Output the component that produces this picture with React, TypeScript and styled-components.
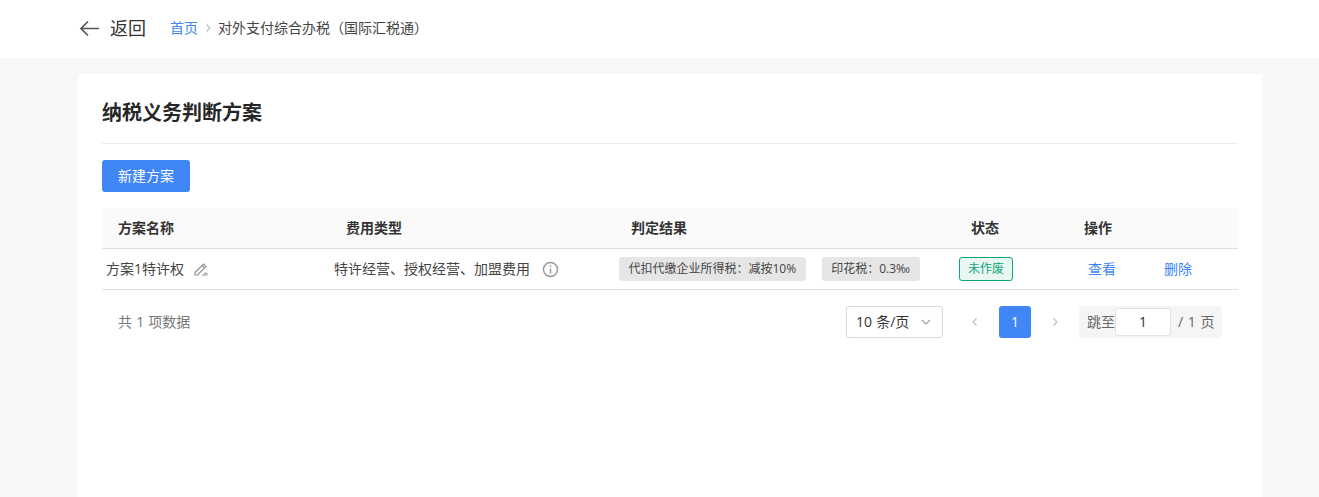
import React from "react";
import styled, { createGlobalStyle } from "styled-components";

const Global = createGlobalStyle`
  html, body { margin: 0; padding: 0; height: 100%; overflow: hidden; }
  body { background: #f6f7f9; font-family: "Open Sans", "Noto Sans CJK SC", sans-serif; color: #333; font-size: 14px; }
  * { box-sizing: border-box; }
`;

const TopBar = styled.header`
  height: 58px; background: #fff; display: flex; align-items: center; padding-left: 78px;
`;
const BackLink = styled.a`
  display: flex; align-items: center; gap: 9px; width: 92px; font-size: 18px; line-height: 24px; color: #333;
  padding-bottom: 2px;
`;
const Crumbs = styled.nav`
  display: flex; align-items: center; font-size: 14px; line-height: 20px; color: #444; padding-bottom: 2px;
`;
const CrumbLink = styled.a`color: #4086f4;`;
const CrumbSep = styled.span`
  width: 20px; display: flex; justify-content: center; color: #bbb;
`;
const Page = styled.main`padding: 16px 57px 0 78px;`;
const Card = styled.section`
  background: #fff; padding: 24px 24px 0; height: 423px;
`;
const TitleBar = styled.div`
  height: 46px; border-bottom: 1px solid #ebebeb; margin-bottom: 16px;
`;
const Title = styled.h1`
  margin: 0; font-size: 20px; line-height: 30px; font-weight: 700; color: #262626;
`;
const PrimaryButton = styled.button`
  display: block; width: 88px; height: 32px; border: 0; border-radius: 3px; background: #4086f4; color: #fff;
  font: inherit; font-size: 14px; padding: 0 0 2px; margin-bottom: 16px;
`;
const cols = "228px 285px 340px 113px 170px";
const HeadRow = styled.div`
  display: grid; grid-template-columns: ${cols}; height: 41px; background: #fafafa;
  border-bottom: 1px solid #dedede; align-items: center;
`;
const HeadCell = styled.div`
  padding-left: 16px; font-weight: 600; font-size: 14px; line-height: 20px; color: #333;
`;
const BodyRow = styled.div`
  display: grid; grid-template-columns: ${cols}; height: 41px;
  border-bottom: 1px solid #dedede; align-items: center;
`;
const Cell = styled.div`
  padding-left: 4px; display: flex; align-items: center; line-height: 20px; color: #444; white-space: nowrap;
`;
const IconSlot = styled.span<{ $gap: number }>`
  display: inline-flex; margin-left: ${(p) => p.$gap}px; color: #8c8c8c;
`;
const Tag = styled.span`
  height: 24px; display: inline-flex; align-items: center; padding: 0 9.5px; background: #e6e6e6;
  border-radius: 3px; font-size: 12px; color: #444; margin-right: 16px;
`;
const Status = styled.span`
  height: 24px; width: 54px; display: inline-flex; align-items: center; justify-content: center;
  background: #e8f7f1; border: 1px solid #0ea678; border-radius: 3px; font-size: 12px; color: #12a37a;
`;
const ActionLink = styled.a`
  color: #4086f4; padding: 0 16px; margin-right: 16px;
`;
const Footer = styled.div`
  display: flex; align-items: center; padding: 16px; height: 64px;
`;
const Total = styled.span`color: #777; font-size: 14px; flex: 1; padding-bottom: 2px; word-spacing: 0.5px;`;
const SizeSelect = styled.div`
  width: 97px; height: 32px; border: 1px solid #d9d9d9; border-radius: 3px; display: flex; align-items: center;
  justify-content: space-between; padding: 0 10px 2px 9px; color: #333; margin-right: 16px; word-spacing: 0.5px;
`;
const SelectCaret = styled.span`display: inline-flex; color: #999; margin-top: 2px;`;
const PageArrow = styled.span`
  width: 32px; height: 32px; display: flex; align-items: center; justify-content: center; color: #bdbdbd;
`;
const PageNum = styled.span`
  width: 32px; height: 32px; margin: 0 8px; border-radius: 3px; background: #4086f4; color: #fff;
  display: flex; align-items: center; justify-content: center; padding-bottom: 2px;
`;
const Jumper = styled.div`
  margin-left: 8px; width: 143px; height: 32px; background: #f5f5f5; border-radius: 3px; display: flex;
  align-items: center; padding-left: 8px; color: #666;
`;
const JumpLabel = styled.span`padding-bottom: 2px; word-spacing: 1px;`;
const JumpInput = styled.div`
  width: 56px; height: 28px; background: #fff; border: 1px solid #e2e2e2; border-radius: 3px; color: #333;
  display: flex; align-items: center; justify-content: center; margin-right: 7px; padding-bottom: 2px;
`;

const Chevron = ({ dir }: { dir: "l" | "r" | "d" }) => (
  <svg width="12" height="12" viewBox="0 0 12 12" fill="none" stroke="currentColor" strokeWidth="1.1">
    <path d={dir === "l" ? "M7.5 2.5 4 6l3.500 3.500" : dir === "r" ? "M4.500 2.500 8 6 4.500 9.500" : "M2 4l4 4 4-4"} />
  </svg>
);

export default function App() {
  return (
    <>
      <Global />
      <TopBar>
        <BackLink>
          <svg width="23" height="23" viewBox="0 0 23 23" fill="none" stroke="#555" strokeWidth="1.7">
            <path d="M21 11.500H3M10 4.500l-7 7 7 7" />
          </svg>
          返回
        </BackLink>
        <Crumbs>
          <CrumbLink>首页</CrumbLink>
          <CrumbSep><Chevron dir="r" /></CrumbSep>
          <span>对外支付综合办税（国际汇税通）</span>
        </Crumbs>
      </TopBar>
      <Page>
        <Card>
          <TitleBar><Title>纳税义务判断方案</Title></TitleBar>
          <PrimaryButton>新建方案</PrimaryButton>
          <HeadRow>
            <HeadCell>方案名称</HeadCell>
            <HeadCell>费用类型</HeadCell>
            <HeadCell>判定结果</HeadCell>
            <HeadCell>状态</HeadCell>
            <HeadCell>操作</HeadCell>
          </HeadRow>
          <BodyRow>
            <Cell>
              方案1特许权
              <IconSlot $gap={9}>
                <svg width="16" height="16" viewBox="0 0 16 16" fill="none" stroke="currentColor" strokeWidth="1.100">
                  <path d="M2 11.500 10.500 3l2.500 2.500L4.500 14H2z M9 4.500 11.500 7 M9 14h5.500 M11 12.300h3.500" />
                </svg>
              </IconSlot>
            </Cell>
            <Cell>
              特许经营、授权经营、加盟费用
              <IconSlot $gap={12}>
                <svg width="17" height="17" viewBox="0 0 17 17" fill="none" stroke="#999" strokeWidth="1.500">
                  <circle cx="8.500" cy="8.500" r="7" />
                  <path d="M8.500 7.500v5M8.500 4.500v1.500" />
                </svg>
              </IconSlot>
            </Cell>
            <Cell>
              <Tag>代扣代缴企业所得税：减按10%</Tag>
              <Tag>印花税：0.3‰</Tag>
            </Cell>
            <Cell><Status>未作废</Status></Cell>
            <Cell>
              <ActionLink>查看</ActionLink>
              <ActionLink>删除</ActionLink>
            </Cell>
          </BodyRow>
          <Footer>
            <Total>共 1 项数据</Total>
            <SizeSelect>10 条/页 <SelectCaret><Chevron dir="d" /></SelectCaret></SizeSelect>
            <PageArrow><Chevron dir="l" /></PageArrow>
            <PageNum>1</PageNum>
            <PageArrow><Chevron dir="r" /></PageArrow>
            <Jumper>
              <JumpLabel>跳至</JumpLabel>
              <JumpInput>1</JumpInput>
              <JumpLabel>/ 1 页</JumpLabel>
            </Jumper>
          </Footer>
        </Card>
      </Page>
    </>
  );
}
